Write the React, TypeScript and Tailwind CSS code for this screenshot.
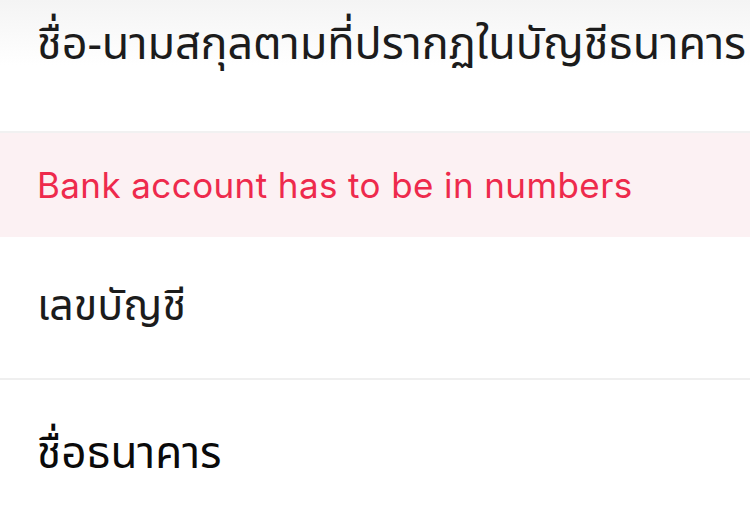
export default function App() {
  const thai = { fontFamily: '"Noto Sans Thai", "Noto Sans", "DejaVu Sans", sans-serif' };
  return (
    <div className="w-[750px] h-[506px] overflow-hidden bg-white">
      <div className="h-[131px] px-[37px] pt-[14px] bg-gradient-to-b from-[#f4f4f4] via-white to-white">
        <div className="text-[45px] leading-[62px] text-[#1c1c1c] whitespace-nowrap tracking-[-0.1px]" style={thai}>
          ชื่อ-นามสกุลตามที่ปรากฏในบัญชีธนาคาร
        </div>
      </div>
      <div className="h-[2px] bg-[#f1f1f1]" />
      <div className="h-[104px] flex items-center px-[37px] bg-[#fcf1f3]">
        <span className="text-[35px] text-[#ee2a4c] font-['Inter',sans-serif] tracking-[0.4px]">
          Bank account has to be in numbers
        </span>
      </div>
      <div className="h-[141px] flex items-center px-[37px]">
        <span className="text-[43px] text-[#1c1c1c]" style={thai}>เลขบัญชี</span>
      </div>
      <div className="h-[2px] bg-[#efefef]" />
      <div className="h-[126px] flex items-center px-[37px] pt-[24px]">
        <span className="text-[44px] text-[#0a0a0a]" style={thai}>ชื่อธนาคาร</span>
      </div>
    </div>
  );
}
